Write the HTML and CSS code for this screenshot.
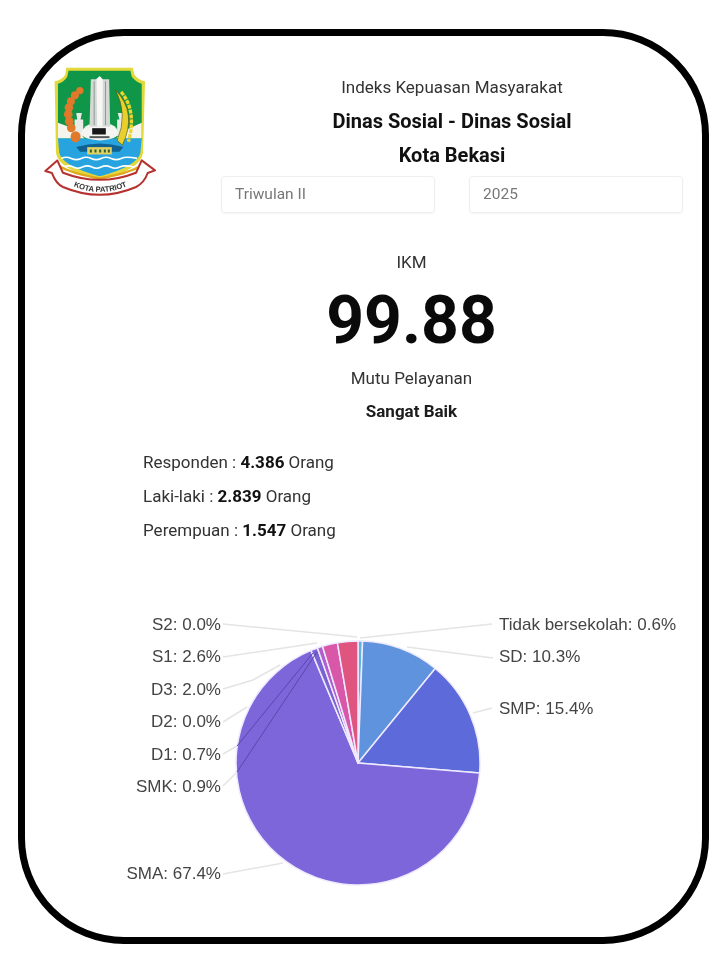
FILE: index.html
```html
<!DOCTYPE html>
<html lang="id">
<head>
  <meta charset="UTF-8" />
  <title>Indeks Kepuasan Masyarakat</title>
  <link rel="stylesheet" href="styles.css">
</head>
<body>

<div class="frame">
  <div class="top">
    <svg class="logo" viewBox="68 135 337 395" width="112" height="132">
      <path d="M135 139H335L340 160Q352 176 372 180L366 395Q360 445 236 478Q110 445 104 395L100 180Q122 176 132 160Z" fill="#e3d83a"/>
      <path d="M142 148H328L332 166Q345 182 362 187V355H110V187Q128 182 138 166Z" fill="#0f9648"/>
      <path d="M110 305L165 325L190 352H110ZM362 305L310 328L285 352H362Z" fill="#f5f5ee"/>
      <path d="M110 352H362L358 395Q350 435 236 466Q122 435 114 395Z" fill="#27a3e0"/>
      <path d="M165 378Q236 356 307 378L295 392H177Z" fill="#12608f"/>
      <path d="M120 412Q135 405 150 412T180 412T210 412T240 412T270 412T300 412T348 412M128 438Q142 431 156 438T184 438T212 438T240 438T268 438T296 438T340 438" fill="none" stroke="#fff" stroke-width="5"/>
      <path d="M116 436Q150 456 236 472Q322 456 356 436" fill="none" stroke="#e0a81e" stroke-width="7"/>
      <path d="M198 378H272V400H198Z" fill="#e3d162"/>
      <path d="M206 385H212V394H206ZM220 385H226V394H220ZM234 385H240V394H234ZM248 385H254V394H248ZM260 385H266V394H260Z" fill="#2c5e3a"/>
      <path d="M165 275H182L178 295H186V345H160V295H168Z" fill="#e8ebe6"/>
      <path d="M290 275H310L305 295H312V345H288V295H295Z" fill="#e8ebe6"/>
      <path d="M180 335Q190 310 215 308H258Q285 310 292 335Q290 355 236 358Q182 355 180 335Z" fill="#f4f4f0"/>
      <path d="M236 165L245 174H264L267 316H205L209 174H226Z" fill="#d5d9d5"/>
      <path d="M226 172L236 165L245 176L244 316H228Z" fill="#f7f7f4"/>
      <path d="M219 180V312M253 180V312" stroke="#8f9994" stroke-width="3"/>
      <path d="M213 321H254V340H213Z" fill="#17171a"/>
      <path d="M205 345H265V351H205Z" fill="#555"/>
      <g fill="#e0792a">
        <circle cx="176" cy="208" r="11"/><circle cx="161" cy="222" r="12"/><circle cx="149" cy="240" r="12"/><circle cx="143" cy="259" r="13"/><circle cx="141" cy="279" r="13"/><circle cx="144" cy="300" r="13"/><circle cx="150" cy="320" r="13"/><ellipse cx="163" cy="347" rx="15" ry="17"/>
      </g>
      <path d="M283 206Q350 275 304 372L288 358Q322 280 283 206Z" fill="#e8cf2a" stroke="#57591c" stroke-width="2"/>
      <path d="M300 212Q348 268 322 362" fill="none" stroke="#ecd52c" stroke-width="10" stroke-dasharray="12 3"/>
      <path d="M108 418L72 450L92 456Q104 488 125 498Q236 545 345 498Q370 485 380 456L402 448L362 418L345 455Q236 498 125 455Z" fill="#fff" stroke="#b5322f" stroke-width="6" stroke-linejoin="round"/>
      <path id="ribbon" d="M145 490Q236 536 330 490" fill="none"/>
      <text class="logo-text"><textPath href="#ribbon" startOffset="50%" text-anchor="middle">KOTA PATRIOT</textPath></text>
    </svg>
    <div class="head">
      <div class="head-line">Indeks Kepuasan Masyarakat</div>
      <div class="head-line head-bold">Dinas Sosial - Dinas Sosial</div>
      <div class="head-line head-bold">Kota Bekasi</div>
      <div class="filters">
        <div class="filter">Triwulan II</div>
        <div class="filter">2025</div>
      </div>
    </div>
  </div>

  <div class="score">
    <div class="score-label">IKM</div>
    <div class="score-num">99.88</div>
    <div class="score-mutu">Mutu Pelayanan</div>
    <div class="score-grade">Sangat Baik</div>
  </div>

  <div class="stats">
    <div class="stat">Responden : <b>4.386</b> Orang</div>
    <div class="stat">Laki-laki : <b>2.839</b> Orang</div>
    <div class="stat">Perempuan : <b>1.547</b> Orang</div>
  </div>

  <svg id="pie" class="pie" viewBox="25 600 676 300" width="676" height="300"></svg>
</div>

<script>
  const cx = 358, cy = 763, r = 122;
  const slices = [
    { pct: 0.6, color: '#5bb5dc' },
    { pct: 10.3, color: '#5f93dd' },
    { pct: 15.4, color: '#5c6bd9' },
    { pct: 67.4, color: '#7d66d9' },
    { pct: 0.9, color: '#7a62d4' },
    { pct: 0.7, color: '#b05fd0' },
    { pct: 2.0, color: '#d957a8' },
    { pct: 2.7, color: '#df5580' }
  ];
  const labels = [
    { text: 'S2: 0.0%', y: 624, side: 'left', line: '223,624 357,637' },
    { text: 'S1: 2.6%', y: 656, side: 'left', line: '223,657 317,643' },
    { text: 'D3: 2.0%', y: 689, side: 'left', line: '223,689 253,680 280,665' },
    { text: 'D2: 0.0%', y: 721, side: 'left', line: '223,722 247,707' },
    { text: 'D1: 0.7%', y: 754, side: 'left', line: '223,754 237,746' },
    { text: 'SMK: 0.9%', y: 786, side: 'left', line: '223,786 237,772' },
    { text: 'SMA: 67.4%', y: 873, side: 'left', line: '223,874 283,863' },
    { text: 'Tidak bersekolah: 0.6%', y: 624, side: 'right', line: '492,624 360,638' },
    { text: 'SD: 10.3%', y: 656, side: 'right', line: '493,658 407,647' },
    { text: 'SMP: 15.4%', y: 708, side: 'right', line: '492,708 473,713' }
  ];
  const pie = document.getElementById('pie');

  function add(tag, attrs, text) {
    const el = document.createElementNS('http://www.w3.org/2000/svg', tag);
    for (const k in attrs) el.setAttribute(k, attrs[k]);
    if (text) el.textContent = text;
    pie.appendChild(el);
  }

  function point(pct) {
    const a = pct / 100 * Math.PI * 2;
    return (cx + r * Math.sin(a)).toFixed(1) + ' ' + (cy - r * Math.cos(a)).toFixed(1);
  }

  labels.forEach(l => add('polyline', { points: l.line, class: 'leader' }));

  let start = 0;
  slices.forEach(s => {
    const end = start + s.pct;
    const big = s.pct > 50 ? 1 : 0;
    add('path', {
      d: `M${cx} ${cy}L${point(start)}A${r} ${r} 0 ${big} 1 ${point(end)}Z`,
      fill: s.color,
      class: 'slice'
    });
    start = end;
  });

  // leaders that run across the big slice
  add('polyline', { points: '237,746 313,653', class: 'leader-over' });
  add('polyline', { points: '237,772 317,652', class: 'leader-over' });

  labels.forEach(l => {
    add('text', {
      x: l.side === 'left' ? 221 : 499,
      y: l.y + 6,
      class: 'pie-label',
      'text-anchor': l.side === 'left' ? 'end' : 'start'
    }, l.text);
  });
</script>

</body>
</html>
```

FILE: styles.css
```css
body {
  margin: 0;
  background: #fff;
  font-family: Roboto, sans-serif;
  color: #1c1c1c;
}
.frame {
  box-sizing: border-box;
  width: 691px;
  height: 915px;
  margin: 29px 0 0 18px;
  border: 7px solid #000;
  border-radius: 106px;
  background: #fff;
  filter: blur(0.4px);
}
.top {
  display: flex;
  padding: 30px 19px 0 19px;
}
.logo {
  display: block;
  flex: none;
}
.logo-text {
  font-family: "Liberation Sans", sans-serif;
  font-size: 23px;
  font-weight: bold;
  fill: #333;
}
.head {
  flex: 1;
  margin-left: 65px;
  padding-top: 4px;
  text-align: center;
}
.head-line {
  height: 34px;
  line-height: 34px;
  font-size: 17px;
  color: #333;
}
.head-bold {
  font-size: 20px;
  font-weight: 700;
  color: #111;
}
.filters {
  display: flex;
  justify-content: space-between;
  margin-top: 4px;
}
.filter {
  box-sizing: border-box;
  width: 214px;
  height: 37px;
  padding-left: 13px;
  line-height: 35px;
  border: 1px solid #eee;
  border-radius: 4px;
  box-shadow: 0 1px 2px rgba(0, 0, 0, 0.05);
  font-size: 15.5px;
  text-align: left;
  color: #777;
}
.score {
  margin-top: 37px;
  padding-left: 96px;
  text-align: center;
}
.score-label {
  line-height: 24px;
  font-size: 17px;
  color: #333;
}
.score-num {
  margin-top: 7px;
  line-height: 80px;
  font-size: 66px;
  font-weight: 700;
  color: #0a0a0a;
}
.score-mutu {
  line-height: 34px;
  font-size: 17px;
  color: #333;
}
.score-grade {
  line-height: 32px;
  font-size: 17px;
  font-weight: 700;
}
.stats {
  margin-top: 18px;
  padding-left: 118px;
}
.stat {
  height: 34px;
  line-height: 34px;
  font-size: 17px;
  color: #333;
}
.stat b {
  color: #111;
}
.pie {
  display: block;
  margin-top: 53px;
}
.leader {
  fill: none;
  stroke: #e4e4e4;
  stroke-width: 1.5;
}
.leader-over {
  fill: none;
  stroke: #5a46ad;
  stroke-width: 1;
}
.slice {
  stroke: #efeaff;
  stroke-width: 1.5;
  stroke-linejoin: round;
}
.pie-label {
  font-family: "Liberation Sans", sans-serif;
  font-size: 17px;
  fill: #444;
}
```
